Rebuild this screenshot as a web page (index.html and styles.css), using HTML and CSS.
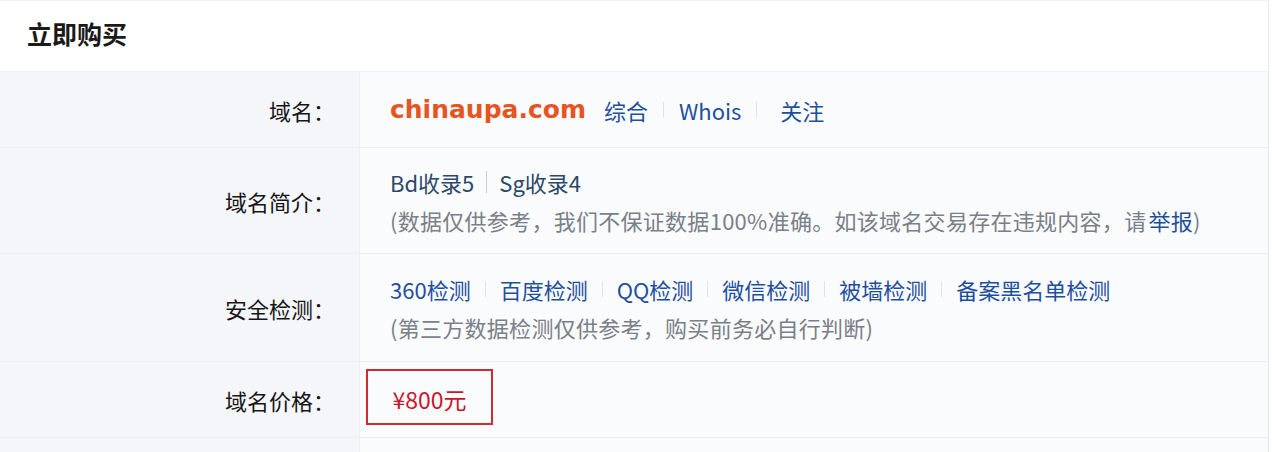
FILE: index.html
```html
<!DOCTYPE html>
<html lang="zh-CN">
<head>
<meta charset="utf-8">
<title>立即购买</title>
<link rel="stylesheet" href="styles.css">
</head>
<body>
<div class="panel">
  <div class="panel-head">立即购买</div>
  <div class="table">
    <div class="row row-short">
      <div class="label">域名：</div>
      <div class="value">
        <div class="line">
          <span class="domain">chinaupa.com</span>
          <a class="link first">综合</a><span class="sep"></span>
          <a class="link">Whois</a><span class="sep"></span>
          <a class="link follow">关注</a>
        </div>
      </div>
    </div>
    <div class="row row-tall">
      <div class="label">域名简介：</div>
      <div class="value">
        <div class="line stats"><span>Bd收录5</span><span class="sep dark"></span><span>Sg收录4</span></div>
        <div class="line note">(数据仅供参考，我们不保证数据100%准确。如该域名交易存在违规内容，请 <a class="link report">举报</a>)</div>
      </div>
    </div>
    <div class="row row-tall2">
      <div class="label">安全检测：</div>
      <div class="value">
        <div class="line checks">
          <a class="link">360检测</a><span class="sep"></span>
          <a class="link">百度检测</a><span class="sep"></span>
          <a class="link">QQ检测</a><span class="sep"></span>
          <a class="link">微信检测</a><span class="sep"></span>
          <a class="link">被墙检测</a><span class="sep"></span>
          <a class="link">备案黑名单检测</a>
        </div>
        <div class="line note">(第三方数据检测仅供参考，购买前务必自行判断)</div>
      </div>
    </div>
    <div class="row row-short">
      <div class="label">域名价格：</div>
      <div class="value price-cell">
        <div class="price">¥800元</div>
      </div>
    </div>
    <div class="row row-tail">
      <div class="label"></div>
      <div class="value"></div>
    </div>
  </div>
</div>
</body>
</html>
```

FILE: styles.css
```css
html, body {
  margin: 0;
  padding: 0;
  background: #ffffff;
}
body {
  font-family: "Noto Sans CJK SC", "Noto Sans", sans-serif;
  font-size: 22px;
  color: #222;
}
.panel {
  width: 1269px;
  height: 452px;
  border-top: 1px solid #eef0f3;
  border-right: 1px solid #e6e9ee;
  box-sizing: border-box;
  overflow: hidden;
}
.panel-head {
  height: 71px;
  display: flex;
  align-items: center;
  padding-left: 27px;
  padding-bottom: 6px;
  font-size: 25px;
  font-weight: bold;
  color: #1a1a1a;
  border-bottom: 1px solid #eceff3;
  box-sizing: border-box;
}
.table {
  display: flex;
  flex-direction: column;
}
.row {
  display: grid;
  grid-template-columns: 360px 1fr;
  border-bottom: 1px solid #eceff3;
}
.row-short { height: 75px; }
.row-tall { height: 105px; }
.row-tall2 { height: 107px; }
.row-tail { height: 40px; border-bottom: none; }
.label {
  background: #f4f6f9;
  display: flex;
  align-items: center;
  justify-content: flex-end;
  padding-right: 24px;
  color: #151515;
  border-right: 1px solid #eef0f4;
}
.value {
  background: #fafbfd;
  display: flex;
  flex-direction: column;
  justify-content: center;
  padding-left: 30px;
}
.line {
  display: flex;
  align-items: center;
  height: 38px;
  white-space: nowrap;
}
.domain {
  font-family: "DejaVu Sans", sans-serif;
  font-weight: bold;
  font-size: 25px;
  color: #e8541f;
  margin-right: 18px;
}
.link {
  color: #1e4f9f;
  text-decoration: none;
}
.sep {
  display: inline-block;
  width: 1px;
  height: 16px;
  background: #dfe3ea;
  margin: 0 15px;
}
.sep.dark {
  height: 22px;
  background: #c9ced6;
  margin: 0 12px;
}
.follow { margin-left: 8px; }
.stats {
  color: #2a4968;
}
.note {
  color: #7a7f88;
  letter-spacing: 0.28px;
}
.report { margin-left: 2px; }
.checks .sep { margin: 0 14px; }
.price-cell {
  padding-left: 6px;
  padding-bottom: 6px;
}
.price {
  width: 127px;
  height: 56px;
  box-sizing: border-box;
  border: 2px solid #d42a2f;
  color: #c8162a;
  font-size: 23px;
  display: flex;
  align-items: center;
  justify-content: center;
  padding-top: 4px;
}
```
